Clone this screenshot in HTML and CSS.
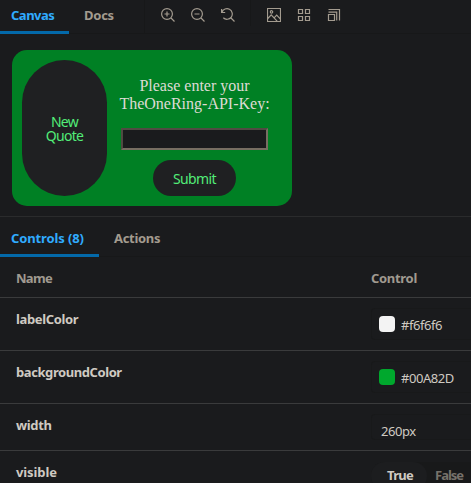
FILE: index.html
```html
<!DOCTYPE html>
<html lang="en">
<head>
<meta charset="utf-8">
<title>Canvas</title>
<link rel="stylesheet" href="styles.css">
</head>
<body>
<div class="app">
  <header class="toolbar">
    <div class="tab active canvas-tab"><span>Canvas</span></div>
    <div class="tab docs-tab"><span>Docs</span></div>
    <div class="tools zoom-tools">
      <svg viewBox="0 0 14 14"><circle cx="6" cy="6" r="5.4"/><path d="M10 10l3.5 3.5M3.5 6h5M6 3.5v5"/></svg>
      <svg viewBox="0 0 14 14"><circle cx="6" cy="6" r="5.4"/><path d="M10 10l3.5 3.5M3.5 6h5"/></svg>
      <svg viewBox="0 0 14 14"><path d="M10 10l3.5 3.5M.6 1v3.5h3.6M1 4.2A5.3 5.3 0 1 1 2.3 9.8"/></svg>
    </div>
    <div class="tools view-tools">
      <svg viewBox="0 0 14 14"><path d="M.5.5h13v13H.5zM.8 10.5l3.4-3.7 5.9 6.4M7.3 9.7l2.4-2.5 3.5 3.6"/><circle cx="4.5" cy="3.9" r="1.2"/></svg>
      <svg viewBox="0 0 14 14"><path d="M1.5 1.5h4v4h-4zM8.5 1.5h4v4h-4zM1.5 8.5h4v4h-4zM8.5 8.5h4v4h-4z"/></svg>
      <svg viewBox="0 0 14 14"><path d="M1.5 6.5h6v6h-6zM1.5 4.2h8.2v8.3M1.5 1.5h11v11"/></svg>
    </div>
  </header>
  <main class="preview">
    <section class="card">
      <button class="quote">New<br>Quote</button>
      <form class="key-form">
        <label for="key">Please enter your<br>TheOneRing-API-Key:</label>
        <input id="key" type="text">
        <button class="submit" type="button">Submit</button>
      </form>
    </section>
  </main>
  <nav class="panel-tabs">
    <div class="tab active controls-tab"><span>Controls (8)</span></div>
    <div class="tab actions-tab"><span>Actions</span></div>
  </nav>
  <section class="table">
    <div class="row head"><span class="name name-head">Name</span><span class="control">Control</span></div>
    <div class="row color-row"><span class="name">labelColor</span><div class="field"><i class="swatch light"></i><span>#f6f6f6</span></div></div>
    <div class="row color-row"><span class="name bg-name">backgroundColor</span><div class="field"><i class="swatch green"></i><span>#00A82D</span></div></div>
    <div class="row width-row"><span class="name">width</span><div class="field text-field"><span>260px</span></div></div>
    <div class="row bool-row"><span class="name visible-name">visible</span><div class="toggle"><b class="on">True</b><b class="off">False</b></div></div>
  </section>
</div>
</body>
</html>
```
FILE: styles.css
```css
* { box-sizing: border-box; }
body {
  margin: 0;
  background: #1a1b1d;
  color: #cfcac2;
  font: 13px/18px "Noto Sans", "Open Sans", sans-serif;
}
.app { width: 471px; height: 483px; overflow: hidden; }
.toolbar { display: flex; height: 34px; border-bottom: 1px solid #171819; }
.tab {
  height: 34px;
  padding: 6px 15px 0;
  color: #a39b8f;
  font-weight: 700;
  font-size: 13px;
  white-space: nowrap;
}
.tab.active { padding-left: 11px; color: #30abff; border-bottom: 3px solid #0369a9; }
.canvas-tab { width: 69px; letter-spacing: -.5px; }
.docs-tab { width: 76px; letter-spacing: -.25px; border-right: 1px solid #171819; }
.tools { display: flex; gap: 16px; padding: 8px 0 0 15.5px; height: 26px; }
.zoom-tools { width: 106px; border-right: 1px solid #171819; }
.tools svg { width: 14px; height: 14px; flex: none; fill: none; stroke: #a39b8f; stroke-width: 1.2; }
.preview { height: 183px; padding: 16px 12px 0; border-bottom: 1px solid #2a2b2c; }
.card {
  display: flex;
  width: 280px;
  height: 156px;
  padding: 10px;
  background: #008024;
  border-radius: 15px;
}
button { padding: 0; border: 0; background: #1f2022; color: #52ed78; font: 14px/14px "Noto Sans", sans-serif; }
.quote { width: 85px; height: 136px; padding-top: 2px; border-radius: 43px; letter-spacing: -.7px; }
.key-form { display: flex; flex-direction: column; align-items: center; width: 175px; padding-top: 17px; }
label { color: #dedbd4; font: 16px/18px "Liberation Serif", serif; text-align: center; white-space: nowrap; }
#key { width: 147px; height: 22px; margin-top: 15px; background: #1a1b1d; border: 2px solid; border-color: #504a42 #776e62 #776e62 #504a42; }
.submit { width: 83px; height: 36px; margin-top: 10px; padding-top: 2px; border-radius: 18px; letter-spacing: -.6px; }
.panel-tabs { display: flex; height: 40px; border-bottom: 1px solid #171819; }
.panel-tabs .tab { height: 40px; padding-top: 12px; }
.controls-tab { width: 99px; letter-spacing: -.12px; }
.actions-tab { letter-spacing: -.3px; }
.row { display: flex; border-bottom: 1px solid #3a3b3c; }
.name { width: 371px; padding-left: 16px; font-weight: 700; letter-spacing: -.35px; }
.name-head { letter-spacing: -.7px; }
.bg-name { letter-spacing: -.42px; }
.visible-name { letter-spacing: -.1px; }
.control { letter-spacing: -.3px; }
.row.head { height: 41px; padding-top: 12px; color: #a09a90; font-weight: 700; }
.color-row { height: 53px; padding-top: 12px; }
.field { display: flex; align-items: center; gap: 6px; width: 100px; height: 32px; margin-top: -2px; padding: 0 0 0 7px; border: 1px solid #18191a; border-right: 0; border-radius: 4px 0 0 4px; letter-spacing: -.45px; }
.field span { padding-top: 2px; }
.swatch { width: 16px; height: 16px; border-radius: 4px; }
.light { background: #f3f3f3; }
.green { background: #00a82d; }
.width-row { height: 47px; padding-top: 12px; }
.text-field { height: 26px; padding: 6px 0 0 9px; }
.bool-row { height: 40px; padding-top: 12px; }
.toggle { display: flex; width: 100px; height: 28px; margin-top: -1px; background: #18191a; border-radius: 14px 0 0 14px; letter-spacing: -.7px; }
.toggle b { padding-top: 4px; }
.on { width: 56px; padding-left: 16px; background: #1c1d1f; border-radius: 14px; }
.off { padding-left: 8px; color: #77726b; letter-spacing: -1px; }
```
